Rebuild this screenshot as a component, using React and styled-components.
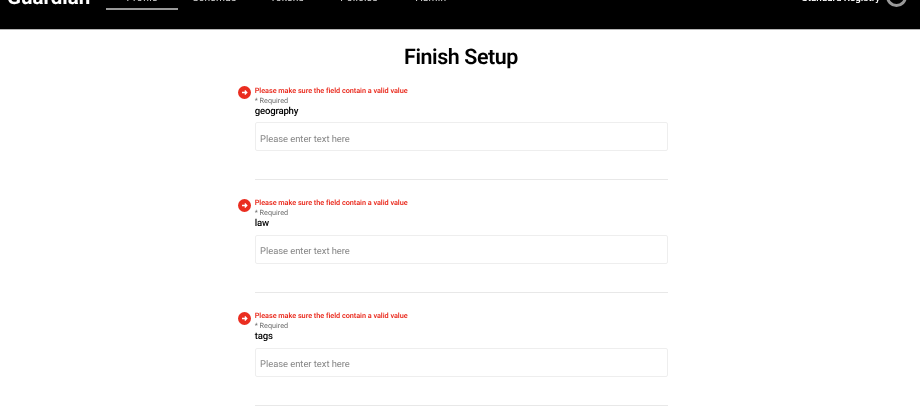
import React from "react";
import styled, { createGlobalStyle } from "styled-components";

const GlobalStyle = createGlobalStyle`
  * { box-sizing: border-box; }
  html, body { margin: 0; overflow: hidden; background: #fff; }
  body {
    font-family: Roboto, "Liberation Sans", sans-serif;
    color: #000;
    text-rendering: geometricPrecision;
  }
`;

const Page = styled.div`
  height: 413px;
  overflow: hidden;
  display: flex;
  flex-direction: column;
  will-change: opacity;
`;

const Header = styled.header`
  flex: none;
  height: 58px;
  margin-top: -28px;
  padding: 0 13px 0 7px;
  display: flex;
  align-items: flex-start;
  background: #000;
  border-bottom: 1px solid #b5b5b5;
  color: #fff;
`;

const Brand = styled.div`
  width: 99px;
  padding-top: 14px;
  font-size: 20.5px;
  line-height: 24px;
  font-weight: 700;
  white-space: nowrap;
`;

const Nav = styled.nav`
  display: flex;
`;

const Tab = styled.a`
  width: ${(p) => p.$width}px;
  height: 38px;
  padding-top: 21px;
  border-bottom: 2px solid ${(p) => (p.$active ? "#999" : "transparent")};
  font-size: 10.2px;
  line-height: 12px;
  letter-spacing: 0.25px;
  text-align: center;
  color: #ddd;
`;

const User = styled.div`
  margin-left: auto;
  display: flex;
  gap: 6px;
`;

const UserName = styled.span`
  padding-top: 21px;
  font-size: 9.8px;
  line-height: 12px;
  font-weight: 500;
  white-space: nowrap;
`;

const Avatar = styled.span`
  width: 21px;
  height: 21px;
  margin-top: 14px;
  border: 3px solid #999;
  border-radius: 50%;
`;

const Title = styled.h1`
  margin: 14px 0 0 2px;
  font-size: 21.4px;
  line-height: 27px;
  font-weight: 600;
  letter-spacing: -0.42px;
  text-align: center;
`;

const Form = styled.form`
  width: 430.5px;
  margin: 14.5px 0 0 237.5px;
`;

const Field = styled.section`
  display: grid;
  grid-template-columns: 13px 1fr;
  column-gap: 4px;
  height: 112.9px;
`;

const ErrorIcon = styled.svg`
  display: block;
  width: 13px;
  height: 13px;
  margin-top: 0.5px;
`;

const FieldBody = styled.div`
  height: 94.8px;
  padding-left: 0.2px;
  border-bottom: 1px solid #e8e8e8;
`;

const ErrorText = styled.div`
  font-size: 7.3px;
  line-height: 10px;
  font-weight: 600;
  letter-spacing: -0.04px;
  color: #ea2d20;
`;

const Required = styled.div`
  font-size: 7.25px;
  line-height: 10px;
  color: #6e6e6e;
`;

const Label = styled.label`
  display: block;
  font-size: 9.6px;
  line-height: 12px;
  font-weight: 500;
  letter-spacing: -0.19px;
`;

const Input = styled.input`
  display: block;
  width: 413px;
  height: 29px;
  margin-top: 4.6px;
  padding: 5px 4.4px 0;
  border: 1px solid #eeeeee;
  border-radius: 2px;
  outline: 0;
  font: 9.4px Roboto, sans-serif;
  letter-spacing: -0.03px;
  text-rendering: inherit;
  &::placeholder { color: #858585; opacity: 1; }
`;

const tabs = [
  { name: "Profile", width: 72, active: true },
  { name: "Schemas", width: 73 },
  { name: "Tokens", width: 72 },
  { name: "Policies", width: 72 },
  { name: "Admin", width: 72 },
];

const fields = ["geography", "law", "tags"];

export default function App() {
  return (
    <>
      <GlobalStyle />
      <Page>
        <Header>
          <Brand>Guardian</Brand>
          <Nav>
            {tabs.map((t) => (
              <Tab key={t.name} $width={t.width} $active={t.active}>{t.name}</Tab>
            ))}
          </Nav>
          <User>
            <UserName>Standard Registry</UserName>
            <Avatar />
          </User>
        </Header>
        <Title>Finish Setup</Title>
        <Form>
          {fields.map((name) => (
            <Field key={name}>
              <ErrorIcon viewBox="0 0 13 13">
                <circle cx="6.5" cy="6.5" r="6.5" fill="#ea2d20" />
                <path d="M4 6.5h4.7M6.8 4.5l2 2-2 2" fill="none" stroke="#fff" strokeWidth="1.3" />
              </ErrorIcon>
              <FieldBody>
                <ErrorText>Please make sure the field contain a valid value</ErrorText>
                <Required>* Required</Required>
                <Label htmlFor={name}>{name}</Label>
                <Input id={name} placeholder="Please enter text here" />
              </FieldBody>
            </Field>
          ))}
        </Form>
      </Page>
    </>
  );
}
